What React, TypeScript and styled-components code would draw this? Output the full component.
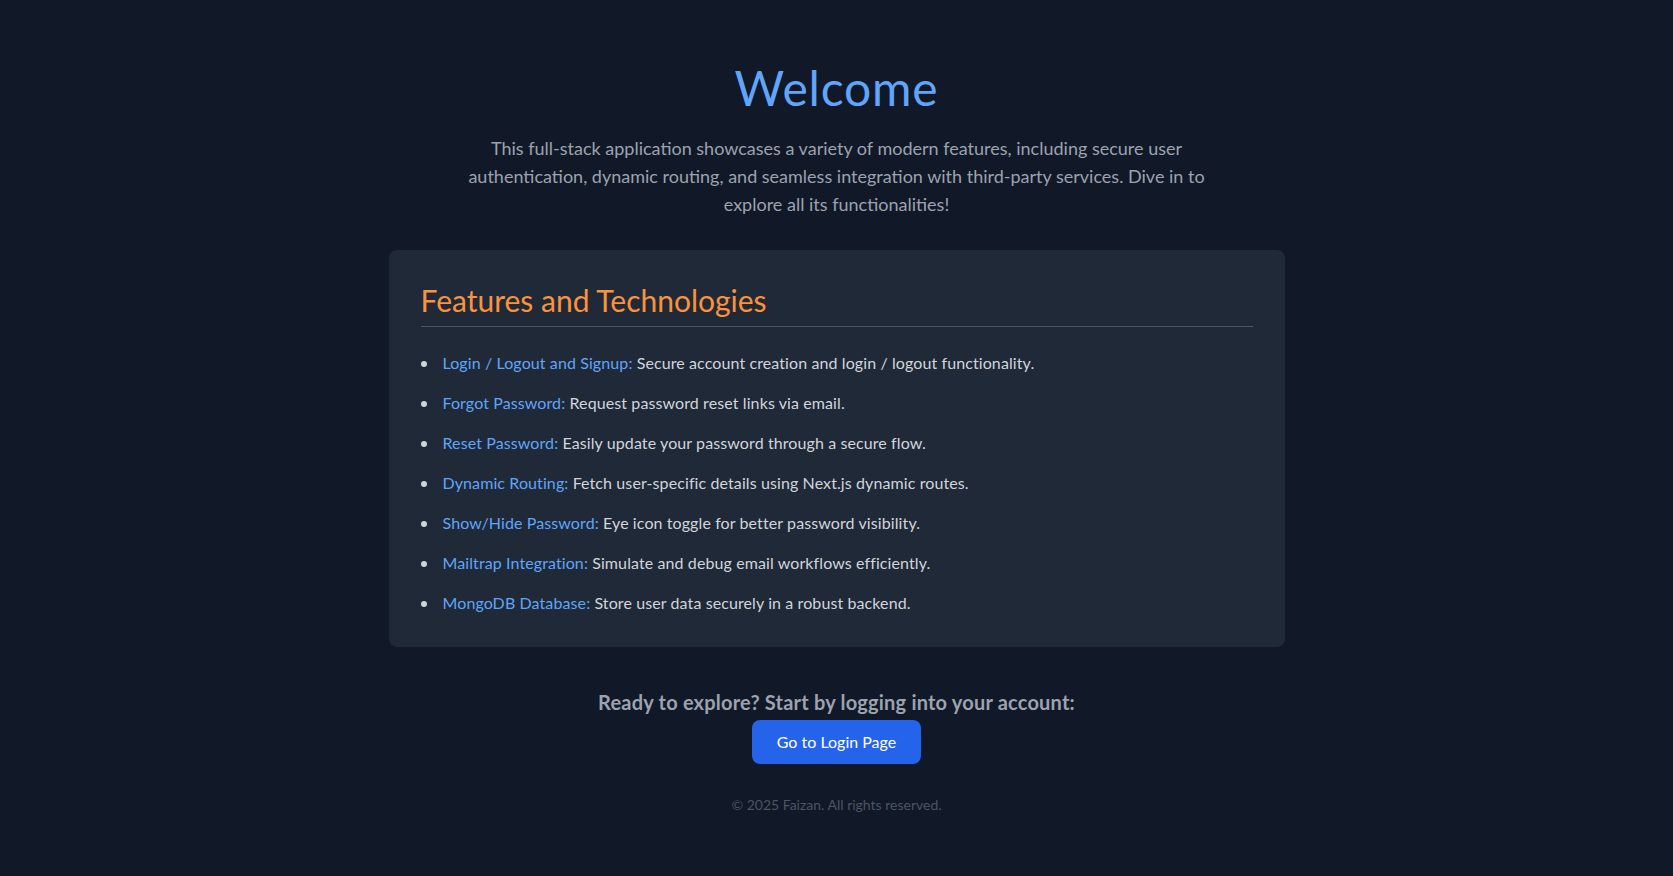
import React from "react";
import styled, { createGlobalStyle } from "styled-components";

const GlobalStyle = createGlobalStyle`
  html, body {
    margin: 0;
    padding: 0;
    background: #111827;
  }
  body {
    font-family: "Lato", "Open Sans", "Noto Sans", sans-serif;
    -webkit-font-smoothing: antialiased;
  }
  * { box-sizing: border-box; }
`;

const Page = styled.main`
  min-height: 100vh;
  display: flex;
  flex-direction: column;
  align-items: center;
  padding: 64px 16px 48px;
  background: #111827;
`;

const Title = styled.h1`
  margin: 0 0 22px;
  font-size: 48px;
  line-height: 48px;
  font-weight: 400;
  letter-spacing: 0.8px;
  color: #60a5fa;
  text-align: center;
`;

const Intro = styled.p`
  margin: 0 0 32px;
  max-width: 768px;
  font-size: 18px;
  line-height: 28px;
  color: #9ca3af;
  text-align: center;
`;

const Card = styled.section`
  width: 100%;
  max-width: 896px;
  background: #1f2937;
  border-radius: 8px;
  padding: 32px;
`;

const CardHeading = styled.h2`
  margin: 0;
  padding-bottom: 8px;
  border-bottom: 1px solid #4b5563;
  font-size: 30px;
  line-height: 36px;
  font-weight: 400;
  color: #fb923c;
`;

const FeatureList = styled.ul`
  margin: 24px 0 0;
  padding: 0;
  list-style: none;
  display: flex;
  flex-direction: column;
  gap: 16px;
`;

const FeatureItem = styled.li`
  font-size: 16px;
  line-height: 24px;
  letter-spacing: 0.1px;
  color: #d1d5db;
  &::before {
    content: "";
    display: inline-block;
    width: 6px;
    height: 6px;
    border-radius: 50%;
    background: #d1d5db;
    margin: 0 16px 0 0;
    vertical-align: middle;
    position: relative;
    top: -1px;
  }
`;

const FeatureLabel = styled.span`
  color: #60a5fa;
`;

const Cta = styled.p`
  margin: 41px 0 0;
  font-size: 20px;
  line-height: 28px;
  font-weight: 700;
  letter-spacing: 0.2px;
  color: #9ca3af;
  text-align: center;
`;

const LoginButton = styled.button`
  margin-top: 4px;
  border: none;
  border-radius: 8px;
  background: #2563eb;
  color: #ffffff;
  font-family: inherit;
  font-size: 16px;
  line-height: 24px;
  padding: 10px 25px;
  cursor: pointer;
`;

const Footer = styled.footer`
  margin-top: 31px;
  font-size: 14px;
  line-height: 20px;
  color: #4b5563;
  text-align: center;
`;

const features: { label: string; text: string }[] = [
  { label: "Login / Logout and Signup", text: "Secure account creation and login / logout functionality." },
  { label: "Forgot Password", text: "Request password reset links via email." },
  { label: "Reset Password", text: "Easily update your password through a secure flow." },
  { label: "Dynamic Routing", text: "Fetch user-specific details using Next.js dynamic routes." },
  { label: "Show/Hide Password", text: "Eye icon toggle for better password visibility." },
  { label: "Mailtrap Integration", text: "Simulate and debug email workflows efficiently." },
  { label: "MongoDB Database", text: "Store user data securely in a robust backend." },
];

export default function App() {
  return (
    <>
      <GlobalStyle />
      <Page>
        <Title>Welcome</Title>
        <Intro>
          This full-stack application showcases a variety of modern features, including secure user
          authentication, dynamic routing, and seamless integration with third-party services. Dive in to
          explore all its functionalities!
        </Intro>
        <Card>
          <CardHeading>Features and Technologies</CardHeading>
          <FeatureList>
            {features.map((f) => (
              <FeatureItem key={f.label}>
                <FeatureLabel>{f.label}:</FeatureLabel> {f.text}
              </FeatureItem>
            ))}
          </FeatureList>
        </Card>
        <Cta>Ready to explore? Start by logging into your account:</Cta>
        <LoginButton type="button">Go to Login Page</LoginButton>
        <Footer>© 2025 Faizan. All rights reserved.</Footer>
      </Page>
    </>
  );
}
